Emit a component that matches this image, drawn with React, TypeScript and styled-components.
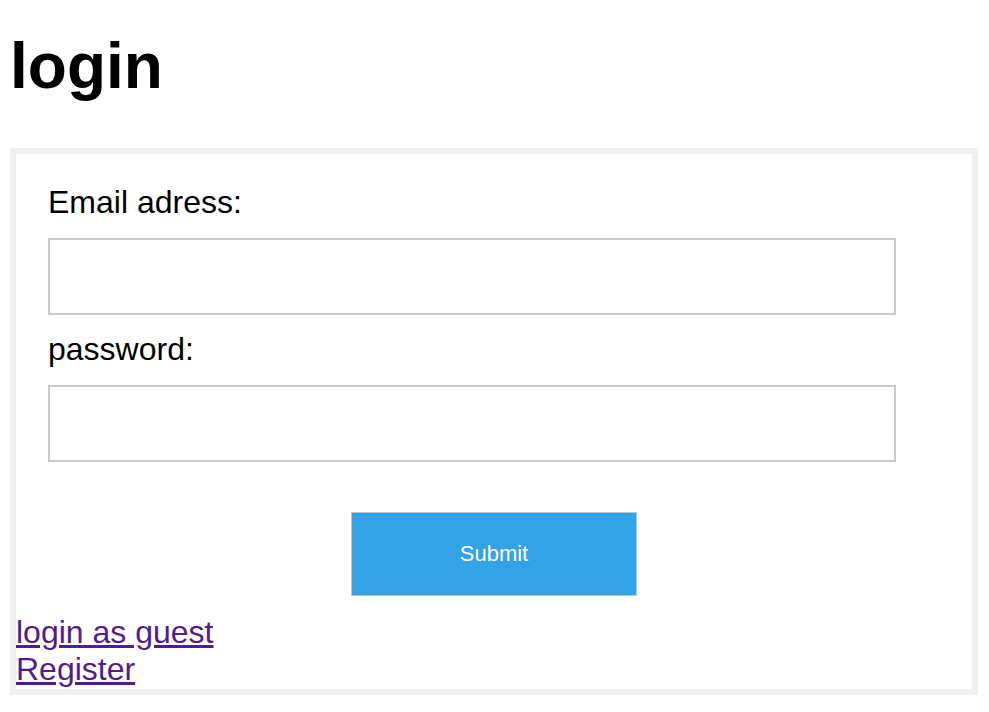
import React from "react";
import styled, { createGlobalStyle } from "styled-components";

const GlobalStyle = createGlobalStyle`
  html, body {
    margin: 0;
    padding: 0;
    background: #ffffff;
  }
  body {
    font-family: "Liberation Sans", Arial, Helvetica, sans-serif;
    color: #000000;
  }
`;

const Page = styled.main`
  display: flex;
  flex-direction: column;
  padding: 29px 11px 0 10px;
`;

const Title = styled.h1`
  margin: 0 0 45px 0;
  font-size: 64px;
  line-height: 74px;
  font-weight: 700;
`;

const Panel = styled.section`
  border: 6px solid #f0f0f0;
  padding: 0 0 1px 0;
  display: flex;
  flex-direction: column;
`;

const Fields = styled.form`
  display: flex;
  flex-direction: column;
  align-items: flex-start;
  padding: 30px 0 0 32px;
`;

const FieldLabel = styled.label<{ $first?: boolean }>`
  font-size: 32px;
  line-height: 37px;
  margin-top: ${(p) => (p.$first ? "0" : "16px")};
`;

const TextInput = styled.input`
  box-sizing: border-box;
  width: 848px;
  height: 77px;
  margin-top: 17px;
  border: 2px solid #c9c9c9;
  background: #ffffff;
  padding: 0 12px;
  font-size: 28px;
  font-family: inherit;
  outline: none;
`;

const ButtonRow = styled.div`
  display: flex;
  justify-content: center;
  margin-top: 50px;
`;

const SubmitButton = styled.button`
  box-sizing: border-box;
  width: 286px;
  height: 84px;
  background: #33a3e8;
  border: 1px solid #b9c6cf;
  color: #ffffff;
  font-family: "Liberation Sans", Arial, sans-serif;
  font-size: 22px;
  cursor: pointer;
`;

const Links = styled.div`
  margin-top: 18px;
  display: flex;
  flex-direction: column;
  align-items: flex-start;
`;

const NavLink = styled.a`
  font-size: 32px;
  line-height: 37px;
  color: #551a8b;
  text-decoration: underline;
`;

export default function App() {
  return (
    <>
      <GlobalStyle />
      <Page>
        <Title>login</Title>
        <Panel>
          <Fields onSubmit={(e) => e.preventDefault()}>
            <FieldLabel $first htmlFor="email">Email adress:</FieldLabel>
            <TextInput id="email" type="email" />
            <FieldLabel htmlFor="password">password:</FieldLabel>
            <TextInput id="password" type="password" />
          </Fields>
          <ButtonRow>
            <SubmitButton type="button">Submit</SubmitButton>
          </ButtonRow>
          <Links>
            <NavLink href="#guest">login as guest</NavLink>
            <NavLink href="#register">Register</NavLink>
          </Links>
        </Panel>
      </Page>
    </>
  );
}
